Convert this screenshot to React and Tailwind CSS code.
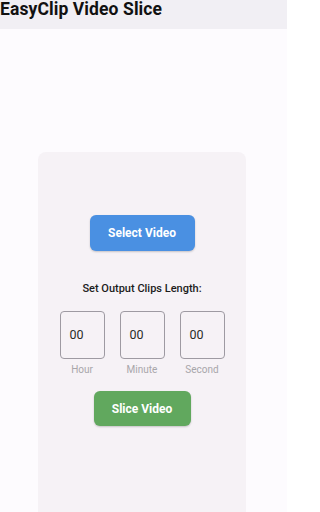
import React from "react";

function TimeBox({ label }) {
  return (
    <div className="flex flex-col items-center">
      <div className="w-[45px] h-[48px] rounded-[4px] border border-[#9e9aa2] flex items-center pl-[9px] text-[12.5px] text-[#2a2a2a]">
        00
      </div>
      <div className="mt-[4px] text-[10px] leading-[14px] text-[#a8a6aa]">{label}</div>
    </div>
  );
}

export default function App() {
  return (
    <div
      className="w-[287px] h-[512px] bg-[#fdfbfe] flex flex-col overflow-hidden"
      style={{ fontFamily: "Roboto, 'Noto Sans', sans-serif" }}
    >
      <div className="h-[29px] shrink-0 bg-[#f1eff4] flex items-start">
        <div className="text-[17.5px] leading-[19px] font-bold text-[#111] tracking-[0.1px]">EasyClip Video Slice</div>
      </div>
      <div className="flex-1 flex justify-center pt-[123px] pr-[3px]">
        <div className="w-[208px] h-full bg-[#f6f2f6] rounded-t-[8px] flex flex-col items-center pt-[63px]">
          <button className="w-[105px] h-[36px] rounded-[6px] bg-[#4a90e2] text-white text-[12px] font-bold shadow-[0_1px_2px_rgba(0,0,0,0.2)]">
            Select Video
          </button>
          <div className="mt-[31px] text-[11px] leading-[14px] font-medium text-[#1c1c1c]">
            Set Output Clips Length:
          </div>
          <div className="mt-[15px] flex gap-[15px]">
            <TimeBox label="Hour" />
            <TimeBox label="Minute" />
            <TimeBox label="Second" />
          </div>
          <button className="mt-[14px] w-[97px] h-[35px] rounded-[6px] bg-[#61a85e] text-white text-[12px] font-bold shadow-[0_1px_2px_rgba(0,0,0,0.2)]">
            Slice Video
          </button>
        </div>
      </div>
    </div>
  );
}
